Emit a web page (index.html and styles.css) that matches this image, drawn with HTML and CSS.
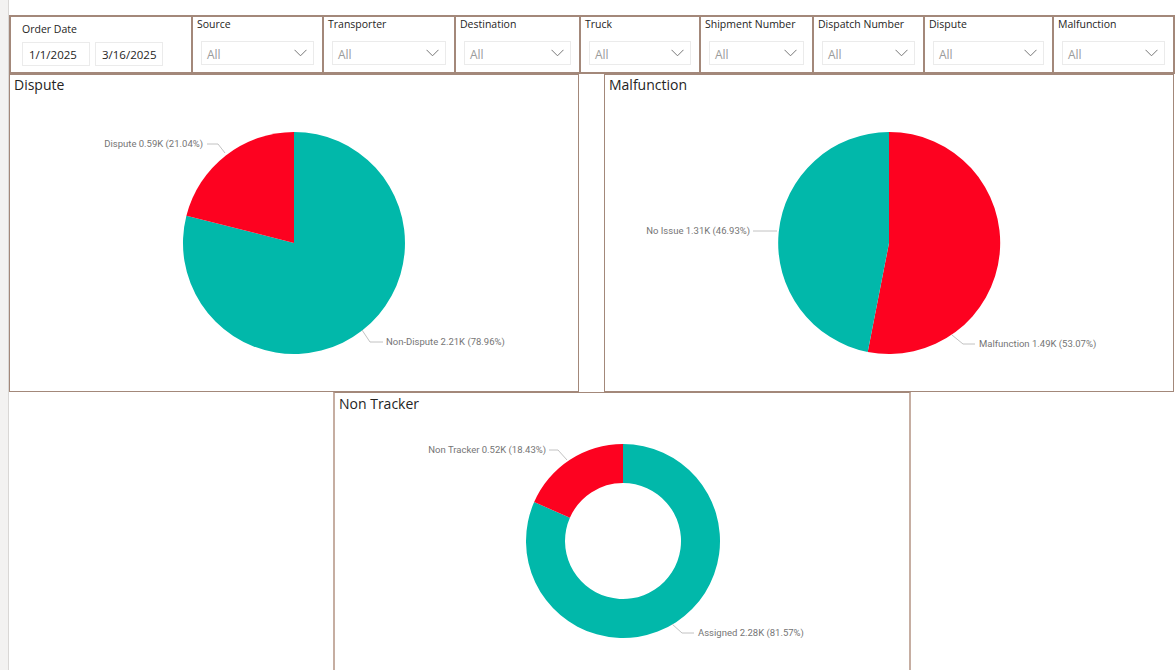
FILE: index.html
```html
<!DOCTYPE html>
<html>
<head>
<meta charset="utf-8">
<link rel="stylesheet" href="styles.css">
</head>
<body>
<div class="page">
  <div class="gutter"></div>
  <div class="canvas">
    <div class="filters">
      <div class="filter date-filter">
        <div class="label">Order Date</div>
        <div class="dates">
          <div class="date">1/1/2025</div>
          <div class="date">3/16/2025</div>
        </div>
      </div>
      <div class="filter w131"><div class="label">Source</div><div class="dd"><span>All</span><svg class="chev" width="13" height="8" viewBox="0 0 13 8"><path d="M0.5 0.8 L6.5 6.8 L12.5 0.8" fill="none" stroke="#777" stroke-width="1"/></svg></div></div>
      <div class="filter w132"><div class="label">Transporter</div><div class="dd"><span>All</span><svg class="chev" width="13" height="8" viewBox="0 0 13 8"><path d="M0.5 0.8 L6.5 6.8 L12.5 0.8" fill="none" stroke="#777" stroke-width="1"/></svg></div></div>
      <div class="filter w125"><div class="label">Destination</div><div class="dd"><span>All</span><svg class="chev" width="13" height="8" viewBox="0 0 13 8"><path d="M0.5 0.8 L6.5 6.8 L12.5 0.8" fill="none" stroke="#777" stroke-width="1"/></svg></div></div>
      <div class="filter w120"><div class="label">Truck</div><div class="dd"><span>All</span><svg class="chev" width="13" height="8" viewBox="0 0 13 8"><path d="M0.5 0.8 L6.5 6.8 L12.5 0.8" fill="none" stroke="#777" stroke-width="1"/></svg></div></div>
      <div class="filter w113"><div class="label">Shipment Number</div><div class="dd"><span>All</span><svg class="chev" width="13" height="8" viewBox="0 0 13 8"><path d="M0.5 0.8 L6.5 6.8 L12.5 0.8" fill="none" stroke="#777" stroke-width="1"/></svg></div></div>
      <div class="filter w111"><div class="label">Dispatch Number</div><div class="dd"><span>All</span><svg class="chev" width="13" height="8" viewBox="0 0 13 8"><path d="M0.5 0.8 L6.5 6.8 L12.5 0.8" fill="none" stroke="#777" stroke-width="1"/></svg></div></div>
      <div class="filter w129"><div class="label">Dispute</div><div class="dd"><span>All</span><svg class="chev" width="13" height="8" viewBox="0 0 13 8"><path d="M0.5 0.8 L6.5 6.8 L12.5 0.8" fill="none" stroke="#777" stroke-width="1"/></svg></div></div>
      <div class="filter w123 last"><div class="label">Malfunction</div><div class="dd"><span>All</span><svg class="chev" width="13" height="8" viewBox="0 0 13 8"><path d="M0.5 0.8 L6.5 6.8 L12.5 0.8" fill="none" stroke="#777" stroke-width="1"/></svg></div></div>
    </div>

    <div class="charts">
      <div class="panel">
        <div class="title">Dispute</div>
        <svg class="chart" width="568" height="294" viewBox="0 0 568 294">
          <path d="M284,146 L284,35 A111,111 0 1 1 176.4,118.7 Z" fill="#01b8aa"/>
          <path d="M284,146 L176.4,118.7 A111,111 0 0 1 284,35 Z" fill="#fd0220"/>
          <polyline points="197,47 208,47 215,56" class="leader"/>
          <text x="193" y="50" text-anchor="end" class="dl">Dispute 0.59K (21.04%)</text>
          <polyline points="352,233 360,245 373,245" class="leader"/>
          <text x="376" y="248" class="dl">Non-Dispute 2.21K (78.96%)</text>
        </svg>
      </div>
      <div class="panel">
        <div class="title">Malfunction</div>
        <svg class="chart" width="568" height="294" viewBox="0 0 568 294">
          <path d="M284,146 L284,35 A111,111 0 1 1 262.7,254.9 Z" fill="#fd0220"/>
          <path d="M284,146 L262.7,254.9 A111,111 0 0 1 284,35 Z" fill="#01b8aa"/>
          <polyline points="148,134 172,134" class="leader"/>
          <text x="145" y="137" text-anchor="end" class="dl">No Issue 1.31K (46.93%)</text>
          <polyline points="347,238 358,247 370,247" class="leader"/>
          <text x="374" y="250" class="dl">Malfunction 1.49K (53.07%)</text>
        </svg>
      </div>
    </div>

    <div class="bottom">
      <div class="panel nt">
        <div class="title">Non Tracker</div>
        <svg class="chart" width="576" height="260" viewBox="0 0 576 260">
          <path d="M288,30 A97,97 0 1 1 199.15,88.1 L234.9,103.7 A58,58 0 1 0 288,69 Z" fill="#01b8aa"/>
          <path d="M199.15,88.1 A97,97 0 0 1 288,30 L288,69 A58,58 0 0 0 234.9,103.7 Z" fill="#fd0220"/>
          <polyline points="214,36 223,36 232,46" class="leader"/>
          <text x="211" y="39" text-anchor="end" class="dl">Non Tracker 0.52K (18.43%)</text>
          <polyline points="337,210 347,219 359,219" class="leader"/>
          <text x="363" y="222" class="dl">Assigned 2.28K (81.57%)</text>
        </svg>
      </div>
    </div>
  </div>
</div>
</body>
</html>
```
FILE: styles.css
```css
* { box-sizing: border-box; }
html, body { margin: 0; padding: 0; background: #fff; }
body {
  width: 1176px;
  height: 670px;
  overflow: hidden;
  font-family: "Open Sans", "Noto Sans", sans-serif;
  color: #252423;
}
.page { display: flex; height: 670px; }
.gutter {
  width: 9px;
  flex: none;
  background: #f3f2f1;
  border-right: 1px solid #d9d7d5;
}
.canvas {
  flex: 1;
  padding-top: 15px;
  display: flex;
  flex-direction: column;
}
.filters { display: flex; height: 59px; }
.filter {
  border: 2px solid #a3887a;
  border-right: none;
  height: 59px;
  padding: 0 8px 0 4px;
  display: flex;
  flex-direction: column;
}
.filter.last { border-right: 2px solid #a3887a; }
.w131 { width: 131px; }
.w132 { width: 132px; }
.w125 { width: 125px; }
.w120 { width: 120px; }
.w113 { width: 113px; }
.w111 { width: 111px; }
.w129 { width: 129px; }
.w123 { width: 123px; }
.label {
  font-size: 10.5px;
  line-height: 14px;
  color: #252423;
  white-space: nowrap;
}
.dd {
  margin-top: 10px;
  margin-left: 4px;
  height: 24px;
  border: 1px solid #ebebeb;
  display: flex;
  align-items: center;
  justify-content: space-between;
  padding: 2px 6px 0 5px;
  font-size: 12px;
  color: #9b9b9b;
}
.chev { margin-top: -2px; }
.date-filter { width: 182px; padding: 5px 8px 0 11px; }
.dates { display: flex; gap: 5px; margin-top: 6px; }
.date {
  width: 68px;
  height: 24px;
  border: 1px solid #ebebeb;
  font-size: 11.5px;
  color: #252423;
  padding: 4px 0 0 6px;
  line-height: 15px;
}
.charts { display: flex; gap: 25px; }
.panel {
  width: 570px;
  height: 318px;
  border: 1px solid #a3887a;
  display: flex;
  flex-direction: column;
}
.title {
  height: 22px;
  font-size: 14px;
  line-height: 20px;
  padding: 0 0 0 4px;
  color: #252423;
}
.chart { display: block; flex: none; }
.leader { fill: none; stroke: #c2c2c2; stroke-width: 1; }
.dl {
  font-family: Roboto, "DejaVu Sans Condensed", sans-serif;
  font-size: 9.5px;
  fill: #757575;
}
.bottom { display: flex; padding-left: 324px; }
.panel.nt {
  width: 578px;
  height: 280px;
  border: 2px solid #c6aea2;
  border-top: 1px solid #a3887a;
}
.panel.nt .title { padding-top: 1px; height: 24px; }
```
